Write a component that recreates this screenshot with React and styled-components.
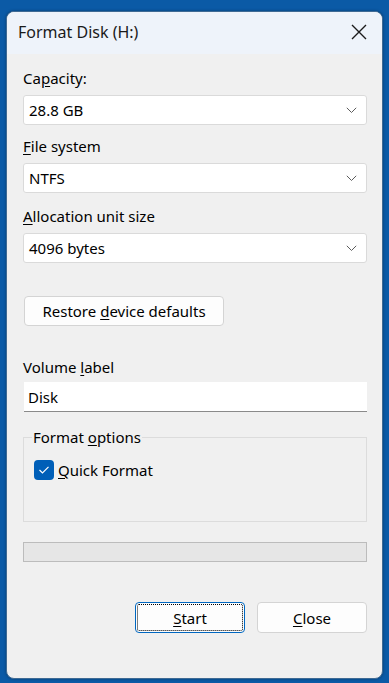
import React from 'react';
import styled, { createGlobalStyle } from 'styled-components';

const GlobalStyle = createGlobalStyle`
	html, body {
		margin: 0;
		padding: 0;
		background: #0b5aa6;
		font-family: 'Noto Sans', 'Open Sans', sans-serif;
	}
	#root {
		height: 683px;
		overflow: hidden;
	}
`;

const Chevron = () => (
	<svg width="11" height="7" viewBox="0 0 11 7">
		<path d="M0.8 0.8 L5.5 5.5 L10.2 0.8" fill="none" stroke="#5c5c5c" strokeWidth="1" />
	</svg>
);

const CloseIcon = () => (
	<svg width="16" height="16" viewBox="0 0 16 16">
		<path d="M1 1 L15 15 M15 1 L1 15" stroke="#1b1b1b" strokeWidth="1.4" />
	</svg>
);

const CheckIcon = () => (
	<svg width="12" height="10" viewBox="0 0 12 10">
		<path d="M1.5 5 L4.5 8 L10.5 1.8" fill="none" stroke="#ffffff" strokeWidth="1.2" />
	</svg>
);

const Field = ({ label, value, top }) => (
	<>
		<Label top={top}>{label}</Label>
		<Select>
			<span>{value}</span>
			<Chevron />
		</Select>
	</>
);

const App = () => {
	return (
		<>
			<GlobalStyle />
			<Window>
				<TitleBar>
					<Title>Format Disk (H:)</Title>
					<CloseButton>
						<CloseIcon />
					</CloseButton>
				</TitleBar>
				<Body>
					<Field label={<>Ca<u>p</u>acity:</>} value="28.8 GB" top={14} />
					<Field label={<><u>F</u>ile system</>} value="NTFS" top={11} />
					<Field label={<><u>A</u>llocation unit size</>} value="4096 bytes" top={13} />

					<RestoreButton>
						<span>
							Restore <u>d</u>evice defaults
						</span>
					</RestoreButton>

					<Label top={31}>
						Volume <u>l</u>abel
					</Label>
					<TextInput>Disk</TextInput>

					<Group>
						<Legend>
							Format <u>o</u>ptions
						</Legend>
						<CheckRow>
							<Checkbox>
								<CheckIcon />
							</Checkbox>
							<span>
								<u>Q</u>uick Format
							</span>
						</CheckRow>
					</Group>

					<Progress />

					<Footer>
						<Button focused>
							<span>
								<u>S</u>tart
							</span>
						</Button>
						<Button>
							<span>
								<u>C</u>lose
							</span>
						</Button>
					</Footer>
				</Body>
			</Window>
		</>
	);
};

const Window = styled.div`
	box-sizing: border-box;
	margin: 11px 0 0 6px;
	width: 377px;
	height: 668px;
	border: 1px solid #3f6a94;
	border-radius: 8px;
	background: #f0f0f0;
	overflow: hidden;
	display: flex;
	flex-direction: column;
	box-shadow: 0 0 3px rgba(0, 0, 0, 0.35);
`;

const TitleBar = styled.div`
	height: 42px;
	background: #eef3fa;
	display: flex;
	align-items: center;
	justify-content: space-between;
	padding: 0 15px 0 11px;
`;

const Title = styled.div`
	font-size: 16px;
	color: #1a1a1a;
	margin-top: -2px;
`;

const CloseButton = styled.div`
	display: flex;
	align-items: center;
	margin-top: -2px;
`;

const Body = styled.div`
	display: flex;
	flex-direction: column;
	padding: 0 15px 0 16px;
	color: #000;
	font-size: 15px;
`;

const Label = styled.div`
	margin-top: ${(p) => p.top}px;
	height: 20px;
	line-height: 20px;
	color: #000;
	u {
		text-underline-offset: 2px;
	}
`;

const Select = styled.div`
	box-sizing: border-box;
	margin-top: 7px;
	height: 30px;
	background: #ffffff;
	border: 1px solid #dadada;
	border-radius: 3px;
	display: flex;
	align-items: center;
	justify-content: space-between;
	padding: 0 9px 0 5px;
`;

const RestoreButton = styled.div`
	box-sizing: border-box;
	margin-top: 33px;
	margin-left: 1px;
	width: 200px;
	height: 30px;
	background: #fdfdfd;
	border: 1px solid #d4d4d4;
	border-radius: 4px;
	display: flex;
	align-items: center;
	justify-content: center;
	u {
		text-underline-offset: 2px;
	}
`;

const TextInput = styled.div`
	box-sizing: border-box;
	margin-top: 5px;
	margin-left: 1px;
	height: 30px;
	background: #ffffff;
	border-bottom: 1px solid #8a8a8a;
	display: flex;
	align-items: center;
	padding-left: 4px;
`;

const Group = styled.div`
	box-sizing: border-box;
	position: relative;
	margin-top: 25px;
	height: 85px;
	border: 1px solid #dcdcdc;
	padding: 22px 0 0 10px;
`;

const Legend = styled.div`
	position: absolute;
	top: -11px;
	left: 8px;
	padding: 0 1px;
	background: #f0f0f0;
	line-height: 20px;
	u {
		text-underline-offset: 2px;
	}
`;

const CheckRow = styled.div`
	display: flex;
	align-items: center;
	gap: 4px;
	u {
		text-underline-offset: 2px;
	}
`;

const Checkbox = styled.div`
	width: 20px;
	height: 20px;
	border-radius: 4px;
	background: #005fb8;
	display: flex;
	align-items: center;
	justify-content: center;
`;

const Progress = styled.div`
	box-sizing: border-box;
	margin-top: 20px;
	height: 20px;
	background: #e6e6e6;
	border: 1px solid #bcbcbc;
`;

const Footer = styled.div`
	margin-top: 40px;
	display: flex;
	justify-content: flex-end;
	gap: 12px;
`;

const Button = styled.div`
	box-sizing: border-box;
	width: 110px;
	height: 31px;
	background: #fdfdfd;
	border: 1px solid ${(p) => (p.focused ? '#0067c0' : '#d4d4d4')};
	border-radius: 4px;
	display: flex;
	align-items: center;
	justify-content: center;
	outline: ${(p) => (p.focused ? '1px dotted #000' : 'none')};
	outline-offset: -3px;
	u {
		text-underline-offset: 2px;
	}
`;

export default App;
